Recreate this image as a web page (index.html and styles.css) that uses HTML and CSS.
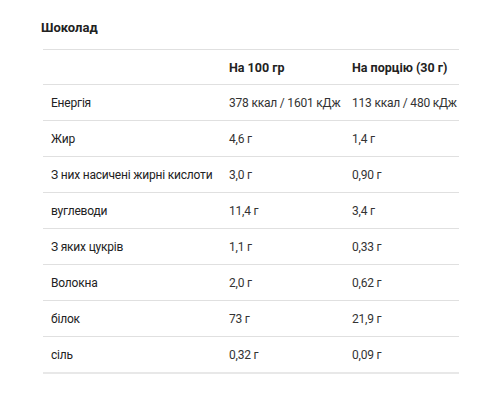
FILE: index.html
```html
<!DOCTYPE html>
<html lang="uk">
<head>
  <meta charset="UTF-8">
  <title>Шоколад</title>
  <link rel="stylesheet" href="styles.css">
</head>
<body>
  <div class="facts">
    <h3 class="facts-title">Шоколад</h3>
    <table class="facts-table">
      <thead>
        <tr><th class="col-name"></th><th class="col-100">На 100 гр</th><th class="col-portion">На порцію (30 г)</th></tr>
      </thead>
      <tbody>
        <tr><td>Енергія</td><td>378 ккал / 1601 кДж</td><td>113 ккал / 480 кДж</td></tr>
        <tr><td>Жир</td><td>4,6 г</td><td>1,4 г</td></tr>
        <tr><td>З них насичені жирні кислоти</td><td>3,0 г</td><td>0,90 г</td></tr>
        <tr><td>вуглеводи</td><td>11,4 г</td><td>3,4 г</td></tr>
        <tr><td>З яких цукрів</td><td>1,1 г</td><td>0,33 г</td></tr>
        <tr><td>Волокна</td><td>2,0 г</td><td>0,62 г</td></tr>
        <tr><td>білок</td><td>73 г</td><td>21,9 г</td></tr>
        <tr><td>сіль</td><td>0,32 г</td><td>0,09 г</td></tr>
      </tbody>
    </table>
  </div>
</body>
</html>
```
FILE: styles.css
```css
body {
  margin: 0;
  padding: 19px 0 0 43px;
  font-family: Roboto, "Liberation Sans", sans-serif;
  background-color: #ffffff;
  color: #333;
}

.facts {
  width: 416px;
}

.facts-title {
  margin: 0 0 0 -2px;
  height: 30px;
  font-size: 13px;
  font-weight: 700;
  line-height: 18px;
  color: #222;
}

.facts-table {
  width: 416px;
  border-collapse: collapse;
  table-layout: fixed;
  font-size: 12px;
  border-top: 1px solid #e0e0e0;
  border-bottom: 2px solid #e8e8e8;
}

.facts-table th,
.facts-table td {
  box-sizing: border-box;
  height: 36px;
  padding: 1px 0 0 8px;
  text-align: left;
  vertical-align: middle;
  white-space: nowrap;
  border-bottom: 1px solid #e0e0e0;
}

.facts-table td {
  letter-spacing: -0.2px;
}

.col-name    { width: 178px; }
.col-100     { width: 123px; }
.col-portion { width: 115px; }

.facts-table th {
  height: 35px;
  font-size: 12.5px;
  font-weight: 700;
  color: #222;
}

.facts-table td:first-child {
  color: #222;
}
```
